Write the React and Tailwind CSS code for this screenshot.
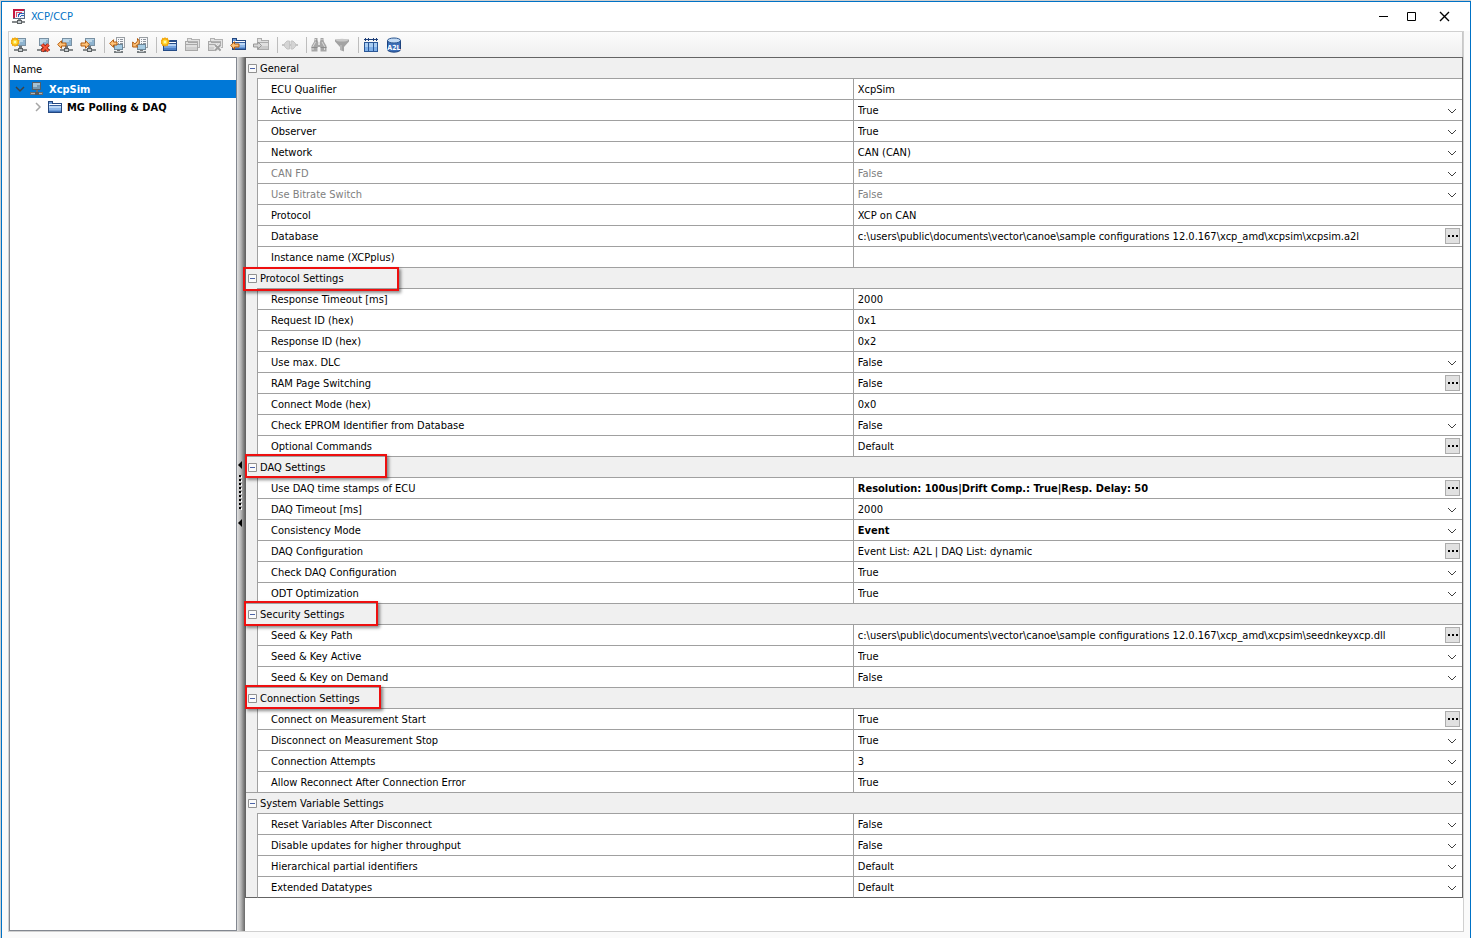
import { useState } from "react";

const SECTIONS = [
  {
    title: "General",
    rows: [
      ["ECU Qualifier", "XcpSim", "text"],
      ["Active", "True", "select"],
      ["Observer", "True", "select"],
      ["Network", "CAN (CAN)", "select"],
      ["CAN FD", "False", "disabled"],
      ["Use Bitrate Switch", "False", "disabled"],
      ["Protocol", "XCP on CAN", "text"],
      ["Database", "c:\\users\\public\\documents\\vector\\canoe\\sample configurations 12.0.167\\xcp_amd\\xcpsim\\xcpsim.a2l", "browse"],
      ["Instance name (XCPplus)", "", "text"],
    ],
  },
  {
    title: "Protocol Settings",
    mark: "-left-[3px] -top-px h-6 w-[156px]",
    rows: [
      ["Response Timeout [ms]", "2000", "text"],
      ["Request ID (hex)", "0x1", "text"],
      ["Response ID (hex)", "0x2", "text"],
      ["Use max. DLC", "False", "select"],
      ["RAM Page Switching", "False", "browse"],
      ["Connect Mode (hex)", "0x0", "text"],
      ["Check EPROM Identifier from Database", "False", "select"],
      ["Optional Commands", "Default", "browse"],
    ],
  },
  {
    title: "DAQ Settings",
    mark: "-left-px -top-[3px] h-6 w-[142px]",
    rows: [
      ["Use DAQ time stamps of ECU", "Resolution: 100us|Drift Comp.: True|Resp. Delay: 50", "browse", true],
      ["DAQ Timeout [ms]", "2000", "select"],
      ["Consistency Mode", "Event", "select", true],
      ["DAQ Configuration", "Event List: A2L | DAQ List: dynamic", "browse"],
      ["Check DAQ Configuration", "True", "select"],
      ["ODT Optimization", "True", "select"],
    ],
  },
  {
    title: "Security Settings",
    mark: "-left-[2px] -top-[3px] h-[25px] w-[134px]",
    rows: [
      ["Seed & Key Path", "c:\\users\\public\\documents\\vector\\canoe\\sample configurations 12.0.167\\xcp_amd\\xcpsim\\seednkeyxcp.dll", "browse"],
      ["Seed & Key Active", "True", "select"],
      ["Seed & Key on Demand", "False", "select"],
    ],
  },
  {
    title: "Connection Settings",
    mark: "-left-px -top-[3px] h-6 w-[136px]",
    rows: [
      ["Connect on Measurement Start", "True", "browse"],
      ["Disconnect on Measurement Stop", "True", "select"],
      ["Connection Attempts", "3", "select"],
      ["Allow Reconnect After Connection Error", "True", "select"],
    ],
  },
  {
    title: "System Variable Settings",
    rows: [
      ["Reset Variables After Disconnect", "False", "select"],
      ["Disable updates for higher throughput", "False", "select"],
      ["Hierarchical partial identifiers", "Default", "select"],
      ["Extended Datatypes", "Default", "select"],
    ],
  },
];

function Svg({ children, className = "" }) {
  return (
    <svg width="16" height="16" viewBox="0 0 16 16" aria-hidden="true" shapeRendering="crispEdges" className={"shrink-0 " + className}>
      {children}
    </svg>
  );
}

/* Shared icon pieces */
const Node = () => (
  <g>
    <rect x="5" y="1" width="10" height="8" fill="#7a91a3" />
    <rect x="6" y="2" width="8" height="6" fill="#8fb4d0" />
    <path d="M6 2h8v1h-2v2H9v2H6z" fill="#bcd6e7" />
    <rect x="8" y="9" width="3" height="3" fill="#6f7375" />
    <rect x="3" y="12" width="13" height="2" fill="#85898b" />
    <rect x="7" y="11" width="5" height="4" fill="#5c6163" />
    <rect x="8" y="12" width="3" height="2" fill="#c5cacd" />
  </g>
);
const Star = () => (
  <g shapeRendering="auto">
    <path d="M4 0l1 1.200L6.800.8l.3 1.800 1.600.8L7.800 5l.9 1.600-1.600.7L6.800 9 5 8.700 4 10 3 8.700 1.200 9 .9 7.300-.7 6.600.3 5-.7 3.400.9 2.600 1.200.8 3 1.200z" fill="#f3a80c" />
    <circle cx="4" cy="5" r="2.600" fill="#ffdf3d" />
    <circle cx="4" cy="5" r="1.200" fill="#fff6b0" />
  </g>
);
const ArrowLeft = () => (
  <path d="M.7 7.500L4.500 3.700v2.300H9v3H4.500v2.300z" fill="#ffc47a" stroke="#b35a0c" shapeRendering="auto" />
);
const Sheet = () => (
  <g>
    <rect x="7" y="0" width="9" height="11" fill="#9a9fa4" />
    <rect x="8" y="1" width="7" height="9" fill="#f7f8fa" />
    <path d="M9 2h1v1H9zM11 2h3v1h-3zM9 4h1v1H9zM11 4h3v1h-3zM9 6h1v1H9zM11 6h3v1h-3z" fill="#8c929a" />
    <rect x="5" y="7" width="9" height="6" fill="#6d8799" />
    <rect x="6" y="8" width="7" height="4" fill="#a5cbe3" />
    <rect x="8" y="13" width="3" height="1" fill="#777" />
    <rect x="5" y="14" width="9" height="2" fill="#777d80" />
    <rect x="7" y="14" width="5" height="1" fill="#b9bfc2" />
  </g>
);
const BlueFolder = () => (
  <g>
    <path d="M1 2h5v2h9v10H1z" fill="#24477f" />
    <path d="M2 3h3v2h9v8H2z" fill="#6c9bd8" />
    <path d="M2 5h12v1H2z" fill="#fff" />
    <path d="M3 6h11v1H3z" fill="#355f9f" />
    <path d="M2 7h12v2H2z" fill="#bcd7f5" />
    <path d="M2 9h12v2H2z" fill="#8db6e8" />
    <path d="M2 12h12v1H2z" fill="#3f72ba" />
  </g>
);
const WindowFolder = () => (
  <g>
    <path d="M2 3h14v11H2z" fill="#254c88" />
    <path d="M3 7h12v6H3z" fill="#73a2df" />
    <path d="M3 5h12v1H3z" fill="#fff" />
    <path d="M3 7h12v2H3z" fill="#b4d1f3" />
    <path d="M3 11h12v2H3z" fill="#4d7fc5" />
  </g>
);
const GreyFolder = () => (
  <g>
    <path d="M3 3V1h5v1h8v9h-2V5H3z" fill="#b2b2b2" />
    <path d="M4 2h3v1H4zM4 3h11v7h-1V4H4z" fill="#e2e2e2" />
    <path d="M1 4h4v1h9v9H1z" fill="#a8a8a8" />
    <path d="M2 5h2v1h9v1H2zM2 8h11v5H2z" fill="#e0e0e0" />
    <path d="M2 10h11v3H2z" fill="#cfcfcf" />
  </g>
);

const ICONS = {
  newDevice: <><Node /><Star /></>,
  removeDevice: (
    <>
      <Node />
      <path d="M8 7.500l6.500 6.500M14.500 7.500L8 14" stroke="#a01c0a" strokeWidth="3.600" shapeRendering="auto" />
      <path d="M8 7.500l6.500 6.500M14.500 7.500L8 14" stroke="#f4573a" strokeWidth="2" shapeRendering="auto" />
    </>
  ),
  importDevice: <><Node /><ArrowLeft /></>,
  exportDevice: <><Node /><path d="M9.300 7.500L5.500 3.700v2.300H1v3h4.500v2.300z" fill="#ffc47a" stroke="#b35a0c" shapeRendering="auto" /></>,
  importList: <><Sheet /><path d="M.7 6.500L4.500 2.700v2.300H8v3H4.500v2.300z" fill="#ffc47a" stroke="#b35a0c" shapeRendering="auto" /></>,
  updateList: <><Sheet /><path d="M.7 5v5h5L4.200 8.500C7.500 7.500 8.500 4 5.500 1.500 6 4.500 4.500 5.800 2.800 6.800z" fill="#ffc47a" stroke="#b35a0c" shapeRendering="auto" /></>,
  newGroup: <><WindowFolder /><Star /></>,
  copyGroup: <GreyFolder />,
  removeGroup: (
    <>
      <GreyFolder />
      <path d="M8 8l5.500 5.500M13.500 8L8 13.500" stroke="#f2f2f2" strokeWidth="4" shapeRendering="auto" />
      <path d="M8 8l5.500 5.500M13.500 8L8 13.500" stroke="#a0a0a0" strokeWidth="2" shapeRendering="auto" />
    </>
  ),
  importGroup: (
    <>
      <g transform="translate(1 -1)"><BlueFolder /></g>
      <path d="M.7 8.500L4.500 4.700v2.300H9v3H4.500v2.300z" fill="#ffc47a" stroke="#b35a0c" shapeRendering="auto" />
    </>
  ),
  exportGroup: (
    <>
      <path d="M4 1h5v2h7v10H4z" fill="#acacac" />
      <path d="M5 2h3v2h7v1H5zM5 6h10v6H5z" fill="#e0e0e0" />
      <path d="M5 9h10v3H5z" fill="#cacaca" />
      <path d="M8.500 8.500L5 5v2H.5v3H5v2z" fill="#d4d4d4" stroke="#979797" shapeRendering="auto" />
    </>
  ),
  connect: (
    <g shapeRendering="auto">
      <path d="M0 8h16" stroke="#c4c4c4" strokeWidth="2" />
      <path d="M7.500 4v8H5L2.500 9.500v-3L5 4zM9 4v8h2l2.500-2.500v-3L11 4z" fill="#d4d4d4" stroke="#c4c4c4" />
    </g>
  ),
  find: (
    <g shapeRendering="auto">
      <path d="M3.500 1h3v3l.8 1v3h1.400V5l.8-1V1h3v3L15.500 9v5.500h-6V10h-3v4.500h-6V9L3.500 4z" fill="#a6a6a6" />
      <path d="M4.500 2v3L2 9.500V13M11 2v3l2.500 4.500V13" fill="none" stroke="#dadada" />
      <path d="M.5 10.500h6M9.500 10.500h6M3.500 4h3M9.500 4h3" stroke="#8c8c8c" />
    </g>
  ),
  filter: (
    <g shapeRendering="auto">
      <path d="M1 2.500h14v2L10 10v4.500l-4-1.500v-3L1 4.500z" fill="#a3a3a3" />
      <ellipse cx="8" cy="3.200" rx="6" ry="1.400" fill="#c9c9c9" />
      <path d="M7 8v5" stroke="#c6c6c6" />
    </g>
  ),
  columns: (
    <>
      <path d="M1 2h14v1H1zM2 1h1v3H2zM5 1h1v3H5zM10 1h1v3h-1zM13 1h1v3h-1z" fill="#1e3f78" />
      <path d="M1 5h14v10H1z" fill="#2a5797" />
      <path d="M2 6h3v8H2zM6 6h4v8H6zM11 6h3v8h-3z" fill="#a9cdf2" />
      <path d="M2 10h3v4H2zM6 10h4v4H6zM11 10h3v4h-3z" fill="#7fb0e8" />
    </>
  ),
  database: (
    <g shapeRendering="auto">
      <path d="M1.500 3.500v9c0 3.500 13 3.500 13 0v-9z" fill="#3c6fb8" stroke="#1d427c" />
      <ellipse cx="8" cy="3.500" rx="6.500" ry="2.500" fill="#c3dbf5" stroke="#2b568f" />
      <text x="8" y="13" textAnchor="middle" fontSize="7" fontWeight="bold" fill="#fff">A2L</text>
    </g>
  ),
};

const TOOL_GROUPS = [
  [["newDevice", "New device"], ["removeDevice", "Remove device"], ["importDevice", "Import device"], ["exportDevice", "Export device"]],
  [["importList", "Import list"], ["updateList", "Update list"]],
  [["newGroup", "New group"], ["copyGroup", "Copy group", true], ["removeGroup", "Remove group", true], ["importGroup", "Import group"], ["exportGroup", "Export group", true]],
  [["connect", "Connect", true]],
  [["find", "Find", true], ["filter", "Filter", true]],
  [["columns", "Columns"], ["database", "A2L database"]],
];

function TitleBar() {
  return (
    <header className="flex h-[29px] items-center bg-white pl-[9px]">
      <Svg>
        <rect x="2" y="0" width="12" height="10" fill="#5b6c86" />
        <rect x="3" y="1" width="10" height="8" fill="#eef2fa" />
        <path d="M2 0h11v2H4v7H2z" fill="#c4173f" />
        <path d="M5 3h6v1H6v4H5z" fill="#e0506c" />
        <path d="M8 4h5v1H9v1H8v2H7V5h1zM10 6h3v1h-3v1H9V7h1z" fill="#2861b8" />
        <rect x="7" y="10" width="3" height="2" fill="#85898b" />
        <rect x="1" y="12" width="13" height="2" fill="#85898b" />
        <rect x="6" y="11" width="5" height="4" fill="#5c6163" />
        <rect x="7" y="12" width="3" height="2" fill="#c5cacd" />
      </Svg>
      <h1 className="ml-1 flex-1 pt-px text-[#0072c6]">XCP/CCP</h1>
      <div className="flex pr-1.5">
        <button type="button" aria-label="Minimize" className="flex h-7 w-[29px] items-center justify-center">
          <svg width="11" height="11" viewBox="0 0 11 11" aria-hidden="true"><path d="M1 5.500h9" stroke="#000" /></svg>
        </button>
        <button type="button" aria-label="Maximize" className="flex h-7 w-[26px] items-center justify-center">
          <svg width="11" height="11" viewBox="0 0 11 11" aria-hidden="true"><path d="M1.500 1.500h8v8h-8z" fill="none" stroke="#000" /></svg>
        </button>
        <button type="button" aria-label="Close" className="flex h-7 w-10 items-center justify-center">
          <svg width="11" height="11" viewBox="0 0 11 11" aria-hidden="true"><path d="M1 1l9 9M10 1l-9 9" stroke="#000" strokeWidth="1.400" /></svg>
        </button>
      </div>
    </header>
  );
}

function Toolbar() {
  return (
    <div role="toolbar" aria-label="Main" className="flex h-[25px] items-center border-r border-[#c8c8c8] bg-linear-to-b from-[#fcfcfc] to-[#efefef] pl-0.5">
      {TOOL_GROUPS.map((group, i) => (
        <div key={i} className="flex items-center">
          {i > 0 && <span className="flex w-1.5 pl-px"><span className="h-4 w-px bg-[#bdbdbd]" /></span>}
          {group.map(([icon, label, disabled]) => (
            <button key={icon} type="button" aria-label={label} disabled={disabled} className="flex w-[23px]">
              <Svg>{ICONS[icon]}</Svg>
            </button>
          ))}
        </div>
      ))}
    </div>
  );
}

function Tree() {
  return (
    <aside className="w-[228px] shrink-0 border border-[#828790] bg-white">
      <div className="flex h-[22px] items-center pl-[3px] pt-px">Name</div>
      <ul role="tree" aria-label="Devices" className="font-bold">
        <li role="treeitem" aria-expanded="true">
          <div className="flex h-[18px] items-center bg-[#0078d7] pl-[5px] text-white">
            <svg width="10" height="10" viewBox="0 0 10 10" aria-hidden="true"><path d="M1 3l4 4 4-4" fill="none" stroke="#404040" strokeWidth="1.500" /></svg>
            <Svg className="ml-1">
              <path d="M3 1h9v8H3z" fill="#555e66" />
              <path d="M4 2h7v6H4z" fill="#7698b0" />
              <path d="M4 2h7v2H8v2H4z" fill="#a6c2d4" />
              <path d="M7 9h2v3H7zM1 11h13v3H1z" fill="#666c70" />
              <path d="M2 12h11v1H2z" fill="#aeb4b8" />
              <path d="M6 11h4v3H6z" fill="#54595c" />
            </Svg>
            <span className="ml-1 pt-px">XcpSim</span>
          </div>
          <ul role="group">
            <li role="treeitem" aria-expanded="false" className="flex h-[18px] items-center pl-[23px]">
              <svg width="10" height="10" viewBox="0 0 10 10" aria-hidden="true"><path d="M3 1l4 4-4 4" fill="none" stroke="#a6a6a6" strokeWidth="1.500" /></svg>
              <Svg className="ml-1"><BlueFolder /></Svg>
              <span className="ml-1 pt-px">MG Polling &amp; DAQ</span>
            </li>
          </ul>
        </li>
      </ul>
    </aside>
  );
}

function Splitter() {
  return (
    <div role="separator" aria-orientation="vertical" className="flex w-2 shrink-0 items-center justify-center bg-linear-to-r from-[#e2e2e2] via-[#b4b4b4] to-[#686868]">
      <svg width="8" height="66" viewBox="0 0 8 66" aria-hidden="true">
        <path d="M5 0v8L1 4zM5 58v8l-4-4z" fill="#000" />
        <path d="M3 14v36" stroke="#000" strokeWidth="2" strokeDasharray="2 2" />
        <path d="M4.500 15v36" stroke="#fff" strokeWidth="1" strokeDasharray="2 2" />
      </svg>
    </div>
  );
}

function ValueEditor({ id, value, kind, bold }) {
  const weight = bold ? " font-bold" : "";
  if (kind === "select" || kind === "disabled") {
    return (
      <div className="grid h-5 items-center">
        <select id={id} disabled={kind === "disabled"} className={"col-start-1 row-start-1 h-5 w-full appearance-none bg-transparent pl-1 pt-px opacity-100 disabled:text-[#808080]" + weight}>
          <option>{value}</option>
        </select>
        <svg width="10" height="6" viewBox="0 0 10 6" aria-hidden="true" className="pointer-events-none col-start-1 row-start-1 mr-[5px] mt-px justify-self-end">
          <path d="M1 1l4 4 4-4" fill="none" stroke="#404040" />
        </svg>
      </div>
    );
  }
  return (
    <div className="flex h-5 items-center pr-0.5">
      <input id={id} type="text" defaultValue={value} className={"h-5 min-w-0 flex-1 bg-transparent pl-1 outline-none" + weight} />
      {kind === "browse" && (
        <button type="button" aria-label="Browse" className="flex h-4 w-[15px] items-center justify-center border border-[#adadad] bg-[#e1e1e1]">
          <svg width="10" height="2" viewBox="0 0 10 2" aria-hidden="true"><path d="M0 0h2v2H0zM4 0h2v2H4zM8 0h2v2H8z" fill="#000" /></svg>
        </button>
      )}
    </div>
  );
}

function Section({ title, mark, rows, index, last }) {
  const [open, setOpen] = useState(true);
  return (
    <tbody>
      <tr>
        <td className="h-[21px] bg-[#f0f0f0]">
          <div className="relative flex h-[21px] items-center pl-0.5">
            <button type="button" aria-label={"Toggle " + title} aria-expanded={open} onClick={() => setOpen(!open)} className="flex">
              <svg width="9" height="9" viewBox="0 0 9 9" aria-hidden="true">
                <path d="M.5.5h8v8h-8z" fill="#fafafa" stroke="#919191" />
                <path d={open ? "M2 4.500h5" : "M2 4.500h5M4.500 2v5"} stroke="#4b63a7" />
              </svg>
            </button>
            {mark && <span className={"pointer-events-none absolute z-10 border-2 border-[#ee0f0f] shadow-[2px_2px_3px_rgba(0,0,0,0.45)] " + mark} />}
          </div>
        </td>
        <th scope="rowgroup" colSpan={2} className="h-[21px] border-b border-[#a0a0a0] bg-[#f0f0f0] pl-[3px] pt-px text-left font-normal">{title}</th>
      </tr>
      {open && rows.map(([label, value, kind, bold], i) => {
        const id = "property-" + index + "-" + i;
        const line = last && i === rows.length - 1 ? " border-b-[#646464]" : "";
        return (
          <tr key={label}>
            {i === 0 && <td rowSpan={rows.length} className={"border-b border-[#a0a0a0] bg-[#f0f0f0]" + (last ? " border-b-[#646464]" : "")} />}
            <th scope="row" className={"h-[21px] border-b border-l border-[#a0a0a0] pl-[13px] pt-px text-left font-normal" + line}>
              <label htmlFor={id} className={kind === "disabled" ? "text-[#808080]" : ""}>{label}</label>
            </th>
            <td className={"h-[21px] border-b border-l border-[#a0a0a0]" + line}>
              <ValueEditor id={id} value={value} kind={kind} bold={bold} />
            </td>
          </tr>
        );
      })}
    </tbody>
  );
}

export default function App() {
  return (
    <div className="flex min-h-screen flex-col border-l border-t border-[#d0d0d0] bg-[#fafafa] font-['DejaVu_Sans_Condensed','DejaVu_Sans',sans-serif] text-[11px] leading-[16px] text-black">
      <div className="flex flex-1 flex-col border-x border-t border-[#0072c6]">
        <TitleBar />
        <main className="mx-1.5 mb-1.5 flex flex-1 flex-col border border-[#d0d0d0] bg-white">
          <Toolbar />
          <div className="flex flex-1">
            <Tree />
            <Splitter />
            <section aria-label="Properties" className="min-w-0 flex-1">
              <table className="w-full table-fixed border-separate border-spacing-0 border-x border-t border-[#646464]">
                <colgroup>
                  <col className="w-[11px]" />
                  <col className="w-[49%]" />
                  <col />
                </colgroup>
                {SECTIONS.map((section, i) => (
                  <Section key={section.title} index={i} last={i === SECTIONS.length - 1} {...section} />
                ))}
              </table>
            </section>
          </div>
        </main>
      </div>
    </div>
  );
}
